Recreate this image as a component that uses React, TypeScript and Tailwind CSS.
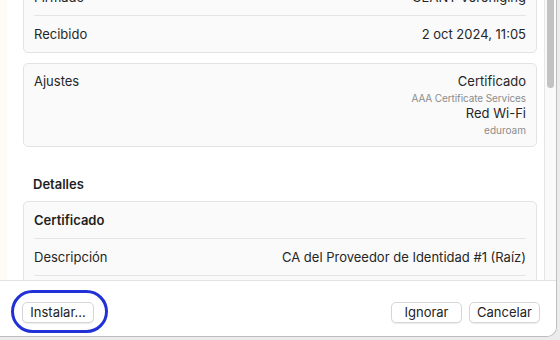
import React from 'react';

const font = { fontFamily: 'Inter, "Noto Sans", sans-serif' };

const Row: React.FC<{ label: string; value?: string; bold?: boolean }> = ({ label, value, bold }) => (
    <div className="h-[36px] px-[10px] flex items-center justify-between">
        <span className={bold ? 'font-semibold text-[#1f1f1f]' : 'text-[#262626]'}>{label}</span>
        {value && <span className="text-[#262626]">{value}</span>}
    </div>
);

const Sep = () => <div className="h-px bg-[#e4e4e4] mx-[10px]" />;

const Button: React.FC<{ label: string; w: string }> = ({ label, w }) => (
    <button className={`${w} h-[21px] rounded-[5px] bg-white border border-[#d6d6d6] shadow-[0_1px_1px_rgba(0,0,0,0.08)] text-[13px] leading-none text-[#222] flex items-center justify-center`}>
        {label}
    </button>
);

export default function App() {
    return (
        <div className="w-[560px] h-[340px] bg-[#ececec] relative overflow-hidden text-[13px] leading-[16px]" style={font}>
            <div className="w-[557px] h-[337px] bg-white border-r border-b border-[#bdbdbd] rounded-br-[10px] flex flex-col overflow-hidden">
                {/* Scroll area */}
                <div className="h-[280px] flex overflow-hidden">
                    <div className="w-[7px] bg-[#fcfbf5]" />
                    <div className="flex-1 pl-[16px] pr-[7px] overflow-hidden">
                        <div className="-mt-[22px]">
                            <div className="bg-[#fafafa] border border-[#e3e3e3] rounded-[5px]">
                                <Row label="Firmado" value="GÉANT Vereniging" />
                                <Sep />
                                <Row label="Recibido" value="2 oct 2024, 11:05" />
                            </div>

                            <div className="mt-[10px] bg-[#fafafa] border border-[#e3e3e3] rounded-[5px] px-[10px] py-[9px] flex justify-between">
                                <span className="text-[#262626]">Ajustes</span>
                                <div className="flex flex-col items-end">
                                    <span className="text-[#262626] leading-[16px]">Certificado</span>
                                    <span className="mt-[2px] text-[10px] leading-[14px] text-[#8c8c8c] tracking-[-0.1px]">AAA Certificate Services</span>
                                    <span className="text-[#262626] leading-[17px]">Red Wi-Fi</span>
                                    <span className="mt-[1px] text-[10px] leading-[14px] text-[#8c8c8c]">eduroam</span>
                                </div>
                            </div>

                            <div className="mt-[29px] px-[10px] font-semibold text-[#1f1f1f]">Detalles</div>

                            <div className="mt-[9px] bg-[#fafafa] border border-[#e3e3e3] rounded-[5px]">
                                <Row label="Certificado" bold />
                                <Sep />
                                <Row label="Descripción" value="CA del Proveedor de Identidad #1 (Raíz)" />
                                <Sep />
                                <Row label="Emisor" value="AAA Certificate Services" />
                            </div>
                        </div>
                    </div>
                    {/* Scrollbar */}
                    <div className="w-[12px] bg-[#fafafa] border-l border-[#e6e6e6] pl-[2px] pr-[1px]">
                        <div className="h-[88px] w-[7px] rounded-b-full bg-[#c2c2c2]" />
                    </div>
                </div>

                {/* Footer */}
                <div className="flex-1 border-t border-[#e3e3e3] bg-white flex items-start justify-between pt-[21px] pl-[22px] pr-[16px]">
                    <Button label="Instalar..." w="w-[72px]" />
                    <div className="flex gap-[7px]">
                        <Button label="Ignorar" w="w-[71px]" />
                        <Button label="Cancelar" w="w-[71px]" />
                    </div>
                </div>
            </div>

            {/* Annotation ring */}
            <div className="absolute left-[11px] top-[290px] w-[97px] h-[43px] rounded-full border-[3px] border-[#2231d6]" />
        </div>
    );
}
